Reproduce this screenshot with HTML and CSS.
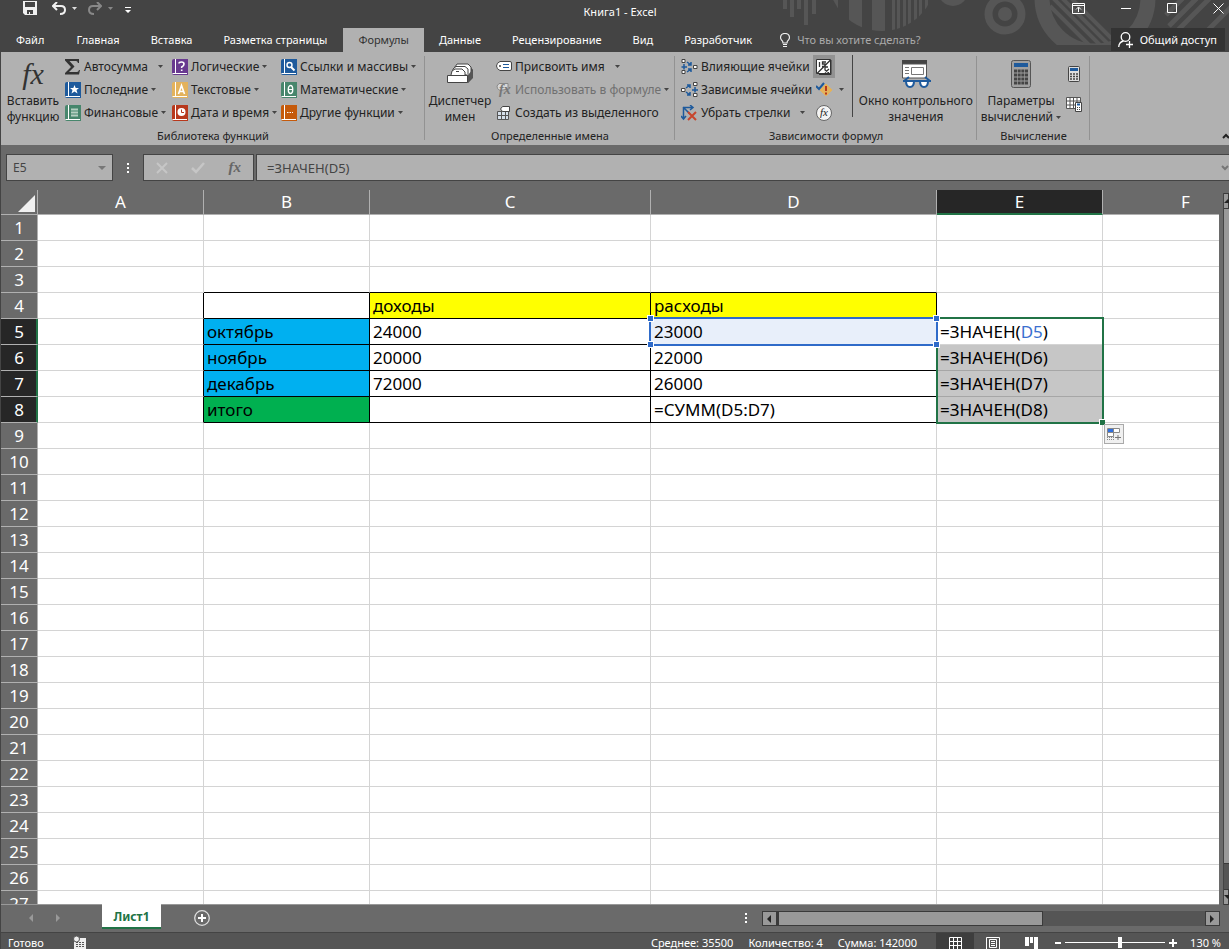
FILE: index.html
```html
<!DOCTYPE html>
<html lang="ru">
<head>
<meta charset="utf-8">
<title>Книга1 - Excel</title>
<link rel="stylesheet" href="styles.css">
</head>
<body>
<svg class="defs" aria-hidden="true">
  <symbol id="book" viewBox="0 0 16 16"><path d="M2 0H16V16H2Q0 16 0 14V2Q0 0 2 0Z" fill="currentColor"/><path d="M3.5 0V14M0.5 14.5H15" stroke="#fff" fill="none"/></symbol>
  <symbol id="caret" viewBox="0 0 5 3"><path d="M0 0H5L2.500 3Z" fill="currentColor"/></symbol>
</svg>
<div class="window">
<header class="top">
  <svg class="art" width="459" height="52" viewBox="770 0 459 52" aria-hidden="true">
    <defs>
      <clipPath id="disc"><circle cx="882" cy="-23" r="54"/></clipPath>
      <clipPath id="bowl"><path d="M1048 0Q1050 28 1075 45H1100L1050 -5Z"/></clipPath>
      <clipPath id="flat"><rect x="1030" y="0" width="130" height="45"/></clipPath>
    </defs>
    <g fill="#565656">
      <path d="M783 0h4v9h-4zM790 0h4v17h-4zM797 0h4v9h-4zM804 0h4v25h-4zM812 0h4v14h-4z"/>
      <path clip-path="url(#disc)" d="M830 0h8v32h-8zM849 0h13v32h-13zM872 0h13v32h-13zM892 0h3v32h-3zM897 0h3v32h-3zM903 0h3v32h-3zM908 0h3v32h-3zM914 0h3v32h-3zM919 0h3v32h-3zM925 0h3v32h-3z"/>
      <circle cx="953" cy="-9" r="15"/>
      <circle cx="1005" cy="14" r="7"/>
    </g>
    <circle cx="1005" cy="14" r="16.500" fill="none" stroke="#565656" stroke-width="8"/>
    <g clip-path="url(#flat)"><circle cx="1095" cy="-2" r="53" fill="none" stroke="#565656" stroke-width="15"/><path d="M1052 -3L1100 45M1061 -3L1109 45M1070 -3L1118 45M1050 6L1089 45" stroke="#565656" stroke-width="4"/></g>
    <path d="M1166 15L1184 -3M1169 26L1198 -3M1178 30L1211 -3M1204 34L1241 -3" stroke="#565656" stroke-width="5"/>
  </svg>
  <div class="titlebar">
    <div class="quick">
      <button aria-label="Сохранить"><svg width="14" height="14" viewBox="0 0 14 14"><path d="M0 0H14V14H2L0 12Z" fill="#f0f0f0"/><path d="M2 1H12V6H2ZM4 9H10V13H7V11H6V13H4Z" fill="#444"/></svg></button>
      <button class="undo" aria-label="Отменить"><svg width="14" height="13" viewBox="0 0 14 13"><path d="M5 0L1 4L5 8M1 4H9Q13 4 13 8T8 12" fill="none" stroke="#f0f0f0" stroke-width="2"/></svg><svg class="caret"><use href="#caret"/></svg></button>
      <button class="redo" aria-label="Вернуть"><svg width="14" height="13" viewBox="0 0 14 13"><path d="M9 0L13 4L9 8M13 4H5Q1 4 1 8T6 12" fill="none" stroke="#888" stroke-width="2"/></svg><svg class="caret"><use href="#caret"/></svg></button>
      <button class="more" aria-label="Настройка панели"><svg width="6" height="7" viewBox="0 0 6 7"><path d="M0 0H6V1H0ZM0 3H6L3 6Z" fill="#fff"/></svg></button>
    </div>
    <h1>Книга1 - Excel</h1>
    <div class="winbtns">
      <button aria-label="Параметры ленты"><svg width="13" height="11" viewBox="0 0 13 11"><path d="M.5.500H12.500V10.500H.5ZM.5 2.500H12.500M6.500 9V4.500M4 6.500L6.500 4L9 6.500" fill="none" stroke="#fff"/></svg></button>
      <button aria-label="Свернуть"><svg width="10" height="11" viewBox="0 0 10 11"><path d="M0 5.500H10" stroke="#fff"/></svg></button>
      <button aria-label="Развернуть"><svg width="10" height="11" viewBox="0 0 10 11"><path d="M.5 .5H9.500V9.500H.5Z" fill="none" stroke="#fff"/></svg></button>
      <button aria-label="Закрыть"><svg width="11" height="11" viewBox="0 0 11 11"><path d="M.5.500L10.500 10.500M10.500.500L.5 10.500" stroke="#fff"/></svg></button>
    </div>
  </div>
  <nav class="tabs">
    <button>Файл</button><button>Главная</button><button>Вставка</button><button>Разметка страницы</button><button class="on">Формулы</button><button>Данные</button><button>Рецензирование</button><button>Вид</button><button>Разработчик</button>
    <label class="tell"><svg width="10" height="15" viewBox="0 0 10 15"><path d="M3 10Q3 8 1.500 7Q.5 5.500 .5 4.500Q.8.500 5 .5T9.500 4.500Q9.500 5.500 8.500 7Q7 8 7 10ZM3 11.500H7M3 13.500H7" fill="none" stroke="#eee" stroke-width="1.200"/></svg><input placeholder="Что вы хотите сделать?"></label>
    <button class="share"><svg width="15" height="16" viewBox="0 0 15 16"><circle cx="7.500" cy="5" r="4.300" fill="none" stroke="#fff" stroke-width="1.300"/><path d="M.7 15Q1 10 5.500 9M8 12.500H15M11.500 9V16" fill="none" stroke="#fff" stroke-width="1.300"/></svg>Общий доступ</button>
  </nav>
</header>

<div class="ribbon">
  <section class="group g1">
    <div class="tools">
      <button class="big"><span class="fxbig">fx</span><span>Вставить функцию</span></button>
      <div class="col c1">
        <button><svg width="16" height="16" viewBox="0 0 16 16"><path d="M0 0H14V4H13Q12.500 2 11 2H4.500L9.500 7.500L4 13H12Q13.500 13 14 11H15L14 15.500H0V14L6 8L0 1.500Z" fill="#333"/></svg>Автосумма<svg class="caret far"><use href="#caret"/></svg></button>
        <button><svg class="blue" width="16" height="16"><use href="#book"/><path d="M9.500 3L10.700 6H14L11.500 8L12.500 11.500L9.500 9.500L6.500 11.500L7.500 8L5 6H8.300Z" fill="#fff"/></svg>Последние<svg class="caret"><use href="#caret"/></svg></button>
        <button><svg class="green" width="16" height="16"><use href="#book"/><path d="M6 4.500H13M6 7.500H13M6 10.500H13" stroke="#b6cfc1" stroke-width="2"/></svg>Финансовые<svg class="caret"><use href="#caret"/></svg></button>
      </div>
      <div class="col c2">
        <button><svg class="violet" width="16" height="16"><use href="#book"/><path d="M7 4.500Q7 3 9.500 3T12 5T9.700 8V9M9.700 10.500V12" fill="none" stroke="#fff" stroke-width="1.600"/></svg>Логические<svg class="caret"><use href="#caret"/></svg></button>
        <button><svg class="sand" width="16" height="16"><use href="#book"/><path d="M6.500 12L9.500 3.500L12.500 12M7.500 9.500H11.500" fill="none" stroke="#fff" stroke-width="1.600"/></svg>Текстовые<svg class="caret"><use href="#caret"/></svg></button>
        <button><svg class="red" width="16" height="16"><use href="#book"/><circle cx="9.500" cy="7" r="4" fill="#fff"/><path d="M9.500 4.500V7.500H12" fill="none" stroke="#b8381c"/></svg>Дата и время<svg class="caret"><use href="#caret"/></svg></button>
      </div>
      <div class="col c3">
        <button><svg class="blue" width="16" height="16"><use href="#book"/><circle cx="8.500" cy="6" r="2.500" fill="none" stroke="#fff" stroke-width="1.400"/><path d="M10 8L13.500 11.500" stroke="#fff" stroke-width="2"/></svg>Ссылки и массивы<svg class="caret"><use href="#caret"/></svg></button>
        <button><svg class="green" width="16" height="16"><use href="#book"/><ellipse cx="9.500" cy="7.500" rx="2.200" ry="4" fill="none" stroke="#fff" stroke-width="1.400"/><path d="M7.500 7.500H11.500" stroke="#fff"/></svg>Математические<svg class="caret"><use href="#caret"/></svg></button>
        <button><svg class="orange" width="16" height="16"><use href="#book"/><path d="M6 7.500H12" stroke="#fff" stroke-dasharray="1.500 1"/></svg>Другие функции<svg class="caret"><use href="#caret"/></svg></button>
      </div>
    </div>
    <h2>Библиотека функций</h2>
  </section>

  <section class="group g2">
    <div class="tools">
      <button class="big"><svg width="28" height="30" viewBox="0 0 28 30"><path d="M6 13L9 7H24L27 11V19L22 24" fill="#555"/><path d="M9 14V8L11 5H22L25 8V16" fill="#fff" stroke="#444"/><path d="M7 15V10L10 7.500H19L22 10V15" fill="#fff" stroke="#444"/><path d="M5 16L6 12L9 10H16L19 13V16" fill="#fff" stroke="#444"/><path d="M1.500 16.500H21.500V23.500H1.500Z" fill="#fff" stroke="#444"/><path d="M22 16L27 10V18L22 24Z" fill="#555"/><path d="M10 12.500H13" stroke="#444"/></svg><span>Диспетчер имен</span></button>
      <div class="col">
        <button><svg width="16" height="16" viewBox="0 0 16 16"><path d="M4 2.500H14Q15.500 2.500 15.500 4V10Q15.500 11.500 14 11.500H4Q.5 10 .5 7T4 2.500Z" fill="#fff" stroke="#444"/><path d="M7 5.500H13M7 8.500H13" stroke="#1e5a9c"/><circle cx="4" cy="7" r="1" fill="#444"/></svg>Присвоить имя<svg class="caret far"><use href="#caret"/></svg></button>
        <button class="off"><svg width="16" height="16" viewBox="0 0 16 16"><path d="M3 1.500H12V7L4 8.500Q.5 7 1 4Z" fill="#d8d8d8" stroke="#888"/><text x="3" y="12" class="fxsmall">fx</text></svg>Использовать в формуле<svg class="caret"><use href="#caret"/></svg></button>
        <button><svg width="16" height="16" viewBox="0 0 16 16"><path d="M1.500 6.500H12.500V14.500H1.500Z" fill="#d5dfea" stroke="#555"/><path d="M1 10.500H13M5.500 6V15M9.500 6V15" stroke="#555"/><path d="M6.500 1.500H13.500V6.500H6.500L4.500 4Z" fill="#fff" stroke="#444"/></svg>Создать из выделенного</button>
      </div>
    </div>
    <h2>Определенные имена</h2>
  </section>

  <section class="group g3">
    <div class="tools">
      <div class="col c4">
        <button><svg width="17" height="16" viewBox="0 0 17 16"><path d="M1 .5H4V3.500H1ZM1 11.500H4V14.500H1ZM12.500 6.500H16V9.500H12.500Z" fill="#fff" stroke="#444"/><path d="M3 5V10.500M.5 8H6M6 3L10 6M6 13L10 10M10 3V6H7M10 13V10H7" stroke="#1e5a9c" stroke-width="1.500" fill="none"/></svg>Влияющие ячейки</button>
        <button><svg width="17" height="16" viewBox="0 0 17 16"><path d="M.5 6.500H4V9.500H.5ZM12.500 .5H16V3.500H12.500ZM12.500 11.500H16V14.500H12.500Z" fill="#fff" stroke="#444"/><path d="M14 5V10.500M11 8H17M5 6L9 3M5 10L9 13M6 3H9V6M6 13H9V10" stroke="#1e5a9c" stroke-width="1.500" fill="none"/></svg>Зависимые ячейки</button>
        <button><svg width="17" height="16" viewBox="0 0 17 16"><path d="M2.500 2V13M0 11L2.500 14L5 11M2.500 2.500H12M9 0L12 2.500L9 5M2 2L9 9" stroke="#1e5a9c" stroke-width="1.500" fill="none"/><path d="M7 7L15 15M15 7L7 15" stroke="#c8452c" stroke-width="2"/></svg>Убрать стрелки<svg class="caret far"><use href="#caret"/></svg></button>
      </div>
      <div class="col c5">
        <button class="pressed" aria-label="Показать формулы"><svg width="16" height="16" viewBox="0 0 16 16"><path d="M.5 .5H14.500V14.500H.5Z" fill="#fff" stroke="#333"/><path d="M15 1V15.500H3" fill="none" stroke="#333"/><path d="M3.500 3V8M10 3H6.500V5H9V7.500H6M14.500 1L1 14.500M12 8H9V11L13 14M9 13.500L13 10" fill="none" stroke="#333" stroke-width="1.300"/></svg></button>
        <button aria-label="Проверка ошибок"><svg width="17" height="16" viewBox="0 0 17 16"><path d="M10 2L16 8L10 14L4 8Z" fill="#e3b25c" stroke="#e3b25c" stroke-linejoin="round"/><path d="M0 4L3 7L8 1" fill="none" stroke="#1e5a9c" stroke-width="2"/><path d="M10 4V9M10 10.500V12.500" stroke="#b8381c" stroke-width="2"/></svg><svg class="caret"><use href="#caret"/></svg></button>
        <button aria-label="Вычислить формулу"><svg width="16" height="16" viewBox="0 0 16 16"><circle cx="8" cy="8" r="7.500" fill="#f4f4f4" stroke="#666"/><text x="4" y="11" class="fxcircle">fx</text></svg></button>
      </div>
      <button class="big watch"><svg width="30" height="30" viewBox="0 0 30 30"><path d="M1 1H26V5H1Z" fill="#444"/><path d="M1.500 5H25.500V19H1.500Z" fill="#fff" stroke="#555"/><path d="M10.500 8.500H22.500V15.500H10.500ZM4 8.500H8M4 11.500H8M4 14.500H8" fill="none" stroke="#777"/><path d="M5 22H13Q13 28 9 28T5 22ZM19 22H27Q27 28 23 28T19 22Z" fill="#fff" stroke="#1e5a9c" stroke-width="2"/><path d="M2 22H30M3 22L8 18M29 22L24 18" stroke="#1e5a9c" stroke-width="2"/></svg><span>Окно контрольного значения</span></button>
    </div>
    <h2>Зависимости формул</h2>
  </section>

  <section class="group g4">
    <div class="tools">
      <button class="big"><svg width="20" height="30" viewBox="0 0 20 30"><rect x=".5" y="1.500" width="19" height="27" rx="2" fill="#a0a0a0" stroke="#555"/><path d="M3 4H17V8H3Z" fill="#1e5a9c"/><path d="M3 12H17M3 16H17M3 20H17M3 24H17" stroke="#444" stroke-width="3" stroke-dasharray="3 .67"/></svg><span>Параметры вычислений <svg class="caret"><use href="#caret"/></svg></span></button>
      <div class="calc">
        <button aria-label="Пересчет"><svg width="12" height="16" viewBox="0 0 12 16"><rect x=".5" y=".5" width="11" height="15" rx="1" fill="#ddd" stroke="#444"/><path d="M2 2H10V5H2Z" fill="#1e5a9c"/><path d="M2 8H10M2 10.500H10M2 13H10" stroke="#444" stroke-width="1.500" stroke-dasharray="2 1"/></svg></button>
        <button aria-label="Произвести вычисления"><svg width="17" height="16" viewBox="0 0 17 16"><path d="M.5.500H14.500V11.500H.5ZM.5 4H14M.5 8H14M4 .5V11M7.500.500V11M11 .5V11" fill="#fff" stroke="#555"/><path d="M9.500 5.500H15.500V14.500H9.500Z" fill="#fff" stroke="#444"/><path d="M11 7.500H14" stroke="#1e5a9c" stroke-width="2"/><path d="M11 10.500H14M11 12.500H14" stroke="#444" stroke-dasharray="1 1"/></svg></button>
      </div>
    </div>
    <h2>Вычисление</h2>
  </section>
  <button class="fold" aria-label="Свернуть ленту"><svg width="8" height="6" viewBox="0 0 8 6"><path d="M1 5L4 2L7 5" fill="none" stroke="#222" stroke-width="2"/></svg></button>
</div>

<div class="fbar">
  <div class="namebox"><input aria-label="Имя ячейки" value="E5"><svg width="8" height="4" viewBox="0 0 8 4"><path d="M0 0H8L4 4Z" fill="#777"/></svg></div>
  <svg class="dots" width="2" height="12" viewBox="0 0 2 12"><path d="M0 1H2V3H0ZM0 5H2V7H0ZM0 9H2V11H0Z" fill="#fff"/></svg>
  <div class="fxbox">
    <button aria-label="Отмена"><svg width="12" height="12" viewBox="0 0 12 12"><path d="M1 1L11 11M11 1L1 11" stroke="#c6c6c6" stroke-width="2"/></svg></button>
    <button aria-label="Ввод"><svg width="14" height="12" viewBox="0 0 14 12"><path d="M1 6L5 10L13 1" fill="none" stroke="#c6c6c6" stroke-width="2.500"/></svg></button>
    <button class="fx">fx</button>
  </div>
  <div class="formula"><input aria-label="Строка формул" value="=ЗНАЧЕН(D5)"><svg width="8" height="6" viewBox="0 0 8 6"><path d="M1 1L4 4L7 1" fill="none" stroke="#777" stroke-width="2"/></svg></div>
</div>

<main class="work">
  <div class="sheet">
    <table>
      <colgroup><col class="wr"><col class="wa"><col class="wa"><col class="wc"><col class="wd"><col class="wa"><col class="wa"></colgroup>
      <thead><tr><th class="corner"><svg width="17" height="17" viewBox="0 0 17 17"><path d="M17 0V17H0Z" fill="#f0f0f0"/></svg></th><th>A</th><th>B</th><th>C</th><th>D</th><th class="act">E</th><th>F</th></tr></thead>
      <tbody>
      <tr><th>1</th><td></td><td></td><td></td><td></td><td></td><td></td></tr>
      <tr><th>2</th><td></td><td></td><td></td><td></td><td></td><td></td></tr>
      <tr class="above"><th>3</th><td></td><td></td><td></td><td></td><td></td><td></td></tr>
      <tr class="data"><th>4</th><td></td><td></td><td class="yellow">доходы</td><td class="yellow">расходы</td><td></td><td></td></tr>
      <tr class="data act"><th>5</th><td></td><td class="cyan">октябрь</td><td>24000</td><td class="ref">23000<span class="refbox"><i></i><i></i><i></i><i></i></span></td><td class="cur">=ЗНАЧЕН(<span class="link">D5</span>)<span class="selbox"><i></i></span><button class="fillopt" aria-label="Параметры автозаполнения"><svg width="14" height="14" viewBox="0 0 14 14"><path d="M.5 1.500H12.500V5.500H.5ZM.5 5.500H6.500V9.500H.5ZM6.500 1.500V5.500" fill="#fff" stroke="#888"/><path d="M1 2H6V5H1Z" fill="#2f6fe0"/><path d="M0 12.500H7M0 10.500H7" stroke="#888" stroke-dasharray="1 1"/><path d="M8 10.500H14M11 8V13" stroke="#777"/></svg></button></td><td></td></tr>
      <tr class="data act"><th>6</th><td></td><td class="cyan">ноябрь</td><td>20000</td><td>22000</td><td class="sel">=ЗНАЧЕН(D6)</td><td></td></tr>
      <tr class="data act"><th>7</th><td></td><td class="cyan">декабрь</td><td>72000</td><td>26000</td><td class="sel">=ЗНАЧЕН(D7)</td><td></td></tr>
      <tr class="data act"><th>8</th><td></td><td class="total">итого</td><td></td><td>=СУММ(D5:D7)</td><td class="sel">=ЗНАЧЕН(D8)</td><td></td></tr>
      <tr><th>9</th><td></td><td></td><td></td><td></td><td></td><td></td></tr>
      <tr><th>10</th><td></td><td></td><td></td><td></td><td></td><td></td></tr>
      <tr><th>11</th><td></td><td></td><td></td><td></td><td></td><td></td></tr>
      <tr><th>12</th><td></td><td></td><td></td><td></td><td></td><td></td></tr>
      <tr><th>13</th><td></td><td></td><td></td><td></td><td></td><td></td></tr>
      <tr><th>14</th><td></td><td></td><td></td><td></td><td></td><td></td></tr>
      <tr><th>15</th><td></td><td></td><td></td><td></td><td></td><td></td></tr>
      <tr><th>16</th><td></td><td></td><td></td><td></td><td></td><td></td></tr>
      <tr><th>17</th><td></td><td></td><td></td><td></td><td></td><td></td></tr>
      <tr><th>18</th><td></td><td></td><td></td><td></td><td></td><td></td></tr>
      <tr><th>19</th><td></td><td></td><td></td><td></td><td></td><td></td></tr>
      <tr><th>20</th><td></td><td></td><td></td><td></td><td></td><td></td></tr>
      <tr><th>21</th><td></td><td></td><td></td><td></td><td></td><td></td></tr>
      <tr><th>22</th><td></td><td></td><td></td><td></td><td></td><td></td></tr>
      <tr><th>23</th><td></td><td></td><td></td><td></td><td></td><td></td></tr>
      <tr><th>24</th><td></td><td></td><td></td><td></td><td></td><td></td></tr>
      <tr><th>25</th><td></td><td></td><td></td><td></td><td></td><td></td></tr>
      <tr><th>26</th><td></td><td></td><td></td><td></td><td></td><td></td></tr>
      <tr><th>27</th><td></td><td></td><td></td><td></td><td></td><td></td></tr>
      </tbody>
    </table>
  </div>
  <div class="vscroll">
    <button aria-label="Вверх"><svg width="8" height="5" viewBox="0 0 8 5"><path d="M4 0L8 4H0Z" fill="#222"/></svg></button>
    <div class="vthumb"></div>
    <button class="down" aria-label="Вниз"><svg width="8" height="5" viewBox="0 0 8 5"><path d="M0 0H8L4 4Z" fill="#222"/></svg></button>
  </div>
</main>

<div class="sheets">
  <div class="nav"><button aria-label="Предыдущий лист"><svg width="5" height="8" viewBox="0 0 5 8"><path d="M4 0V8L0 4Z" fill="#999"/></svg></button><button aria-label="Следующий лист"><svg width="5" height="8" viewBox="0 0 5 8"><path d="M0 0V8L4 4Z" fill="#999"/></svg></button></div>
  <button class="sheettab">Лист1</button>
  <button class="add" aria-label="Новый лист"><svg width="16" height="16" viewBox="0 0 16 16"><circle cx="8" cy="8" r="7.300" fill="none" stroke="#ddd" stroke-width="1.300"/><path d="M4 8H12M8 4V12" stroke="#fff" stroke-width="2"/></svg></button>
  <svg class="grip" width="2" height="12" viewBox="0 0 2 12"><path d="M0 1H2V3H0ZM0 5H2V7H0ZM0 9H2V11H0Z" fill="#fff"/></svg>
  <div class="hscroll">
    <button aria-label="Влево"><svg width="5" height="8" viewBox="0 0 5 8"><path d="M4 0V8L0 4Z" fill="#222"/></svg></button>
    <div class="hthumb"></div>
    <button class="right" aria-label="Вправо"><svg width="5" height="8" viewBox="0 0 5 8"><path d="M0 0V8L4 4Z" fill="#222"/></svg></button>
  </div>
</div>

<footer class="status">
  <span class="ready">Готово</span>
  <svg width="13" height="13" viewBox="0 0 13 13"><path d="M1 2H13V13H1Z" fill="#eee"/><path d="M3 6.500H12M3 8.500H12M3 10.500H12" stroke="#555" stroke-dasharray="2 1"/><circle cx="3.500" cy="3" r="3" fill="#eee" stroke="#555"/></svg>
  <span class="stat s1">Среднее: 35500</span><span class="stat">Количество: 4</span><span class="stat">Сумма: 142000</span>
  <div class="views">
    <button class="on" aria-label="Обычный"><svg width="13" height="13" viewBox="0 0 13 13"><path d="M.5.500H12.500V12.500H.5ZM4.500 0V13M8.500 0V13M0 4.500H13M0 8.500H13" fill="none" stroke="#fff"/></svg></button>
    <button aria-label="Разметка страницы"><svg width="14" height="13" viewBox="0 0 14 13"><path d="M.5.500H13.500V12.500H.5ZM3.500 2.500H10.500V10.500H3.500ZM5 4.500H9M5 6.500H9M5 8.500H9" fill="none" stroke="#fff"/></svg></button>
    <button aria-label="Страничный режим"><svg width="13" height="13" viewBox="0 0 13 13"><path d="M0 0H4V9H0ZM5 0H8V6H5ZM9 0H13V13H0V12H9Z" fill="#fff"/></svg></button>
  </div>
  <div class="zoom"><button aria-label="Уменьшить"><svg width="6" height="6" viewBox="0 0 6 6"><path d="M0 3H6" stroke="#fff" stroke-width="2"/></svg></button><input type="range" min="0" max="100" value="55" aria-label="Масштаб"><button aria-label="Увеличить"><svg width="8" height="8" viewBox="0 0 8 8"><path d="M0 4H8M4 0V8" stroke="#fff" stroke-width="2"/></svg></button></div>
  <span class="pct">130 %</span>
</footer>
</div>
</body>
</html>
```
FILE: styles.css
```css
* { box-sizing: border-box; }
body { margin: 0; font: 12px/16px "Noto Sans", "Open Sans", sans-serif; color: #222; background: #6a6a6a; }
button, input { font: inherit; color: inherit; background: none; border: 0; padding: 0; margin: 0; outline: 0; }
button { display: flex; align-items: center; justify-content: center; white-space: nowrap; }
h1, h2 { margin: 0; font: inherit; }
svg { flex: none; display: block; }
.defs { position: absolute; width: 0; height: 0; }
.caret { width: 5px; height: 3px; color: #444; }
.window { height: 100vh; display: flex; flex-direction: column; border-left: 1px solid #444; overflow: hidden; }

.top { position: relative; background: #444; color: #fff; }
.art { position: absolute; right: 0; top: 0; }
.titlebar { position: relative; display: grid; grid-template-columns: 1fr auto 1fr; height: 28px; align-items: start; }
.titlebar h1 { padding: 4px 0 0 10px; font-size: 11px; }
.quick { display: flex; align-items: center; gap: 11px; padding: 1px 0 0 22px; }
.quick button { gap: 6px; height: 14px; }
.quick .caret { color: #ddd; }
.quick .undo { padding-left: 4px; }
.quick .redo .caret { color: #888; }
.quick .more { padding: 4px 0 0 1px; }
.winbtns { display: flex; justify-content: flex-end; align-items: center; gap: 36px; padding: 2px 5px 0 0; height: 14px; }
.tabs { position: relative; display: flex; height: 24px; font-size: 11px; }
.tabs button { padding: 0 16px 0 15px; }
.tabs button:first-child { margin-right: 1px; }
.tabs .on { background: #b1b1b1; color: #333; padding: 0 15px; }
.tell { display: flex; align-items: center; gap: 7px; padding-left: 12px; flex: 1; }
.tell input { width: 180px; }
.tell input::placeholder { color: #aaa; opacity: 1; }
.tabs .share { background: #333; margin-right: 4px; padding: 0 8px 0 7px; gap: 7px; height: 23px; }

.ribbon { position: relative; display: flex; height: 93px; background: #b1b1b1; flex: none; }
.group { position: relative; display: flex; flex-direction: column; }
.group::after { content: ""; position: absolute; right: 0; top: 4px; bottom: 5px; width: 1px; background: #929292; }
.tools { display: flex; height: 76px; padding-top: 3px; }
.group h2 { text-align: center; font-size: 11px; line-height: 16px; }
.g1 { width: 424px; }
.g2 { width: 250px; }
.g3 { width: 302px; }
.g4 { width: 113px; }
.big { flex-direction: column; justify-content: flex-start; gap: 4px; padding-top: 4px; line-height: 16px; }
.big span { white-space: normal; text-align: center; }
.big .caret { display: inline-block; vertical-align: middle; }
.g1 .big { width: 64px; }
.g2 .big { width: 70px; }
.watch { width: 123px; margin-left: 2px; }
.g4 .big { width: 88px; }
.col button { height: 23px; gap: 3px; justify-content: flex-start; }
.col .far { margin-left: 7px; }
.c1 { width: 107px; }
.c2 { width: 109px; }
.c4 { width: 131px; padding-left: 6px; }
.g2 .col { padding-left: 1px; }
.c5 { width: 47px; padding-left: 7px; border-right: 1px solid #444; height: 62px; }
.col.c5 button { padding-left: 3px; width: 36px; gap: 6px; }
.col.c5 .pressed { background: #929292; width: 22px; padding: 0; justify-content: center; }
.off { color: #707070; }
.blue { color: #1e5a9c; }
.green { color: #47866c; }
.violet { color: #693a90; }
.sand { color: #e3b25c; }
.red { color: #b8381c; }
.orange { color: #c55a0b; }
.fxbig { font: italic 30px/30px "Liberation Serif", serif; color: #333; }
.fxsmall { font: italic bold 14px "Liberation Serif", serif; fill: #777; }
.fxcircle { font: italic 11px "Liberation Serif", serif; fill: #222; }
.calc { display: flex; flex-direction: column; align-items: center; gap: 15px; padding-top: 11px; width: 18px; }
.fold { position: absolute; right: -1px; bottom: 6px; }

.fbar { display: flex; align-items: center; height: 45px; padding-left: 5px; flex: none; }
.namebox, .fxbox, .formula { display: flex; align-items: center; height: 27px; background: #b1b1b1; border: 1px solid #444; color: #444; }
.namebox { width: 107px; padding: 0 6px; }
.namebox input { flex: 1; min-width: 0; }
.dots { margin: 0 14px; }
.fxbox { width: 111px; padding: 0 12px; justify-content: space-between; margin-right: 2px; }
.fx { font: italic bold 15px "Liberation Serif", serif; color: #666; }
.formula { flex: 1; border-right: 0; padding-left: 10px; font-size: 13px; }
.formula input { flex: 1; min-width: 0; }

.work { display: flex; flex: 1; min-height: 0; }
.sheet { flex: 1; min-width: 0; overflow: hidden; background: linear-gradient(#6a6a6a 25px, #fff 25px); border-bottom: 1px solid #999; }
table { table-layout: fixed; width: 1184px; border-collapse: separate; border-spacing: 0; font-size: 17px; line-height: 25px; }
.wr { width: 37px; }
.wa { width: 166px; }
.wc { width: 281px; }
.wd { width: 286px; }
th, td { height: 26px; padding: 0; border: solid #d4d4d4; border-width: 0 1px 1px 0; white-space: nowrap; }
th { background: #6a6a6a; color: #fff; font-weight: 400; border-color: #b0b0b0; }
thead th { height: 25px; line-height: 24px; }
thead .act { background: #262626; border-bottom-color: #217346; box-shadow: inset 0 -1px #217346; }
.corner svg { margin: 2px 2px 0 auto; }
tbody .act th { background: #262626; border-right-color: #217346; box-shadow: inset -1px 0 #217346; }
td { padding-left: 3px; color: #000; }
.above td:nth-child(n+3):nth-child(-n+5), .data td:nth-child(n+3):nth-child(-n+5) { border-bottom-color: #000; }
.data td:nth-child(n+2):nth-child(-n+5) { border-right-color: #000; }
.yellow { background: #ff0; }
.cyan { background: #00b0f0; }
.total { background: #00b050; }
.ref, .cur { position: relative; }
.ref { background: #e8effa; }
.sel { background: #c6c6c6; border-bottom-color: #a6a6a6; }
.link { color: #3a6fcf; }
.refbox { position: absolute; left: -2px; top: -2px; right: -2px; bottom: -2px; border: 2px solid #2f6bc9; z-index: 2; }
.refbox i { position: absolute; width: 7px; height: 7px; background: #2f6bc9; border: 1px solid #fff; }
.refbox i:nth-child(odd) { left: -4px; }
.refbox i:nth-child(even) { right: -4px; }
.refbox i:nth-child(-n+2) { top: -4px; }
.refbox i:nth-child(n+3) { bottom: -4px; }
.selbox { position: absolute; left: -1px; top: -2px; right: -2px; height: 107px; border: 2px solid #217346; z-index: 1; }
.selbox i { position: absolute; right: -3px; bottom: -3px; width: 6px; height: 6px; background: #217346; border: solid #fff; border-width: 1px 0 0 1px; }
.fillopt { position: absolute; left: 167px; top: 105px; width: 20px; height: 20px; background: #f0f0f0; border: 1px solid #aaa; z-index: 3; }

.vscroll { width: 6px; margin: 3px 0 0 4px; background: #555; display: flex; flex-direction: column; border-left: 1px solid #444; overflow: hidden; }
.vscroll button { height: 16px; flex: none; background: #999; border: 1px solid #3a3a3a; border-left: 0; justify-content: flex-start; }
.vthumb { height: 92%; background: #999; border-bottom: 1px solid #3a3a3a; }
.vscroll .down { margin-top: auto; }

.sheets { display: flex; height: 28px; flex: none; border-bottom: 1px solid #444; align-items: flex-start; }
.nav { display: flex; gap: 22px; padding: 9px 0 0 28px; width: 101px; }
.sheettab { width: 59px; height: 25px; background: #fff; border-bottom: 2px solid #217346; color: #217346; font-weight: 700; margin-top: -1px; padding-top: 2px; }
.add { margin: 5px 0 0 33px; }
.grip { margin: 7px 15px 0 auto; }
.hscroll { display: flex; width: 458px; height: 15px; margin: 6px 9px 0 0; background: #555; }
.hscroll button { width: 15px; flex: none; background: #999; border: 1px solid #3a3a3a; }
.hthumb { width: 58%; background: #999; border: 1px solid #3a3a3a; border-left-width: 2px; }
.hscroll .right { margin-left: auto; }

.status { display: flex; align-items: center; height: 16px; flex: none; background: #555; color: #fff; font-size: 11px; padding: 3px 8px 0 7px; }
.ready { width: 65px; }
.s1 { margin-left: auto; }
.stat { margin-right: 15px; }
.views { display: flex; align-self: stretch; margin: -3px 0 0 4px; }
.views button { width: 38px; padding-top: 4px; }
.views .on { background: #3e3e3e; }
.zoom { display: flex; align-items: center; gap: 4px; width: 122px; margin-left: 5px; }
.zoom input { flex: 1; min-width: 0; height: 12px; appearance: none; background: linear-gradient(#fff, #fff) center / 100% 1px no-repeat; }
.zoom input::-webkit-slider-thumb { appearance: none; width: 4px; height: 11px; background: #fff; }
.pct { width: 44px; text-align: right; white-space: nowrap; }
```
